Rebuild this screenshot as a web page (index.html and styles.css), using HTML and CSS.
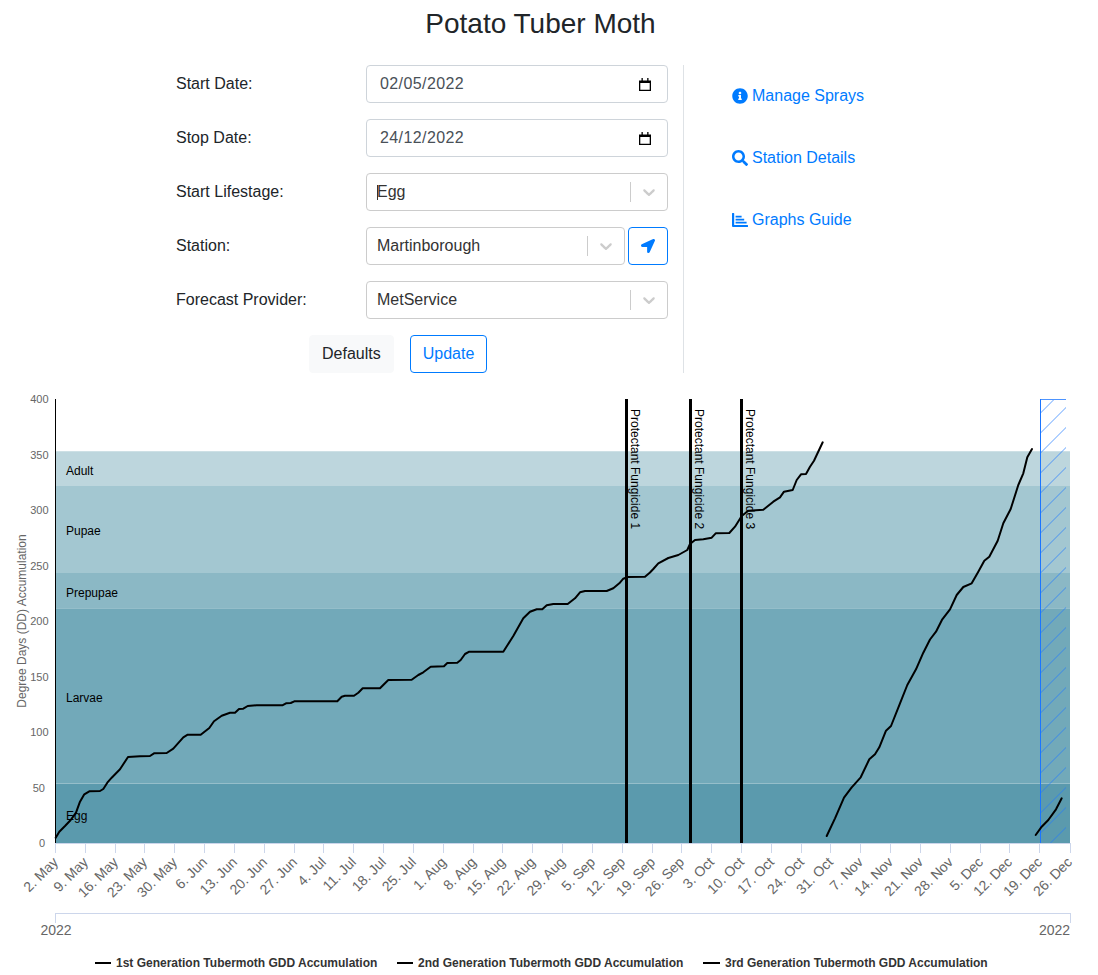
FILE: index.html
```html
<!DOCTYPE html>
<html lang="en">
<head>
<meta charset="utf-8">
<title>Potato Tuber Moth</title>
<link rel="stylesheet" href="styles.css">
</head>
<body>
<div class="page">
  <h1 class="title">Potato Tuber Moth</h1>
  <div class="top">
    <div class="form">
      <div class="row">
        <label class="lbl">Start Date:</label>
        <div class="control date"><span>02/05/2022</span>
          <svg class="cal" viewBox="0 0 12 13"><path d="M0 2.5h12V13H0zM1.3 5v6.7h9.4V5z" fill-rule="evenodd"/><path d="M2.5 0h1.3v3H2.5zM8.2 0h1.3v3H8.2z"/></svg>
        </div>
      </div>
      <div class="row">
        <label class="lbl">Stop Date:</label>
        <div class="control date"><span>24/12/2022</span>
          <svg class="cal" viewBox="0 0 12 13"><path d="M0 2.5h12V13H0zM1.3 5v6.7h9.4V5z" fill-rule="evenodd"/><path d="M2.5 0h1.3v3H2.5zM8.2 0h1.3v3H8.2z"/></svg>
        </div>
      </div>
      <div class="row">
        <label class="lbl">Start Lifestage:</label>
        <div class="control select focused"><span class="val">Egg</span><i class="sep"></i>
          <svg class="chev" viewBox="0 0 20 20"><path d="M4.516 7.548c0.436-0.446 1.043-0.481 1.576 0l3.908 3.747 3.908-3.747c0.533-0.481 1.141-0.446 1.576 0 0.436 0.445 0.408 1.197 0 1.615-0.406 0.418-4.695 4.502-4.695 4.502-0.217 0.223-0.502 0.335-0.789 0.335s-0.572-0.112-0.79-0.335c0 0-4.287-4.084-4.695-4.502s-0.436-1.17 0-1.615z"/></svg>
        </div>
      </div>
      <div class="row">
        <label class="lbl">Station:</label>
        <div class="station">
          <div class="control select"><span class="val">Martinborough</span><i class="sep"></i>
            <svg class="chev" viewBox="0 0 20 20"><path d="M4.516 7.548c0.436-0.446 1.043-0.481 1.576 0l3.908 3.747 3.908-3.747c0.533-0.481 1.141-0.446 1.576 0 0.436 0.445 0.408 1.197 0 1.615-0.406 0.418-4.695 4.502-4.695 4.502-0.217 0.223-0.502 0.335-0.789 0.335s-0.572-0.112-0.79-0.335c0 0-4.287-4.084-4.695-4.502s-0.436-1.17 0-1.615z"/></svg>
          </div>
          <button class="btn outline locate" type="button" aria-label="Locate">
            <svg class="arrow" viewBox="0 0 512 512"><path d="M444.52 3.52L28.74 195.42c-47.97 22.39-31.98 92.75 19.19 92.75h175.91v175.91c0 51.17 70.36 67.17 92.75 19.19l191.9-415.78c15.99-38.39-25.59-79.97-63.97-63.97z"/></svg>
          </button>
        </div>
      </div>
      <div class="row">
        <label class="lbl">Forecast Provider:</label>
        <div class="control select"><span class="val">MetService</span><i class="sep"></i>
          <svg class="chev" viewBox="0 0 20 20"><path d="M4.516 7.548c0.436-0.446 1.043-0.481 1.576 0l3.908 3.747 3.908-3.747c0.533-0.481 1.141-0.446 1.576 0 0.436 0.445 0.408 1.197 0 1.615-0.406 0.418-4.695 4.502-4.695 4.502-0.217 0.223-0.502 0.335-0.789 0.335s-0.572-0.112-0.79-0.335c0 0-4.287-4.084-4.695-4.502s-0.436-1.17 0-1.615z"/></svg>
        </div>
      </div>
      <div class="actions">
        <button class="btn light" type="button">Defaults</button>
        <button class="btn outline" type="button">Update</button>
      </div>
    </div>
    <nav class="links">
      <a class="link" href="#"><svg class="ico" viewBox="0 0 512 512"><path d="M256 8C119.043 8 8 119.083 8 256c0 136.997 111.043 248 248 248s248-111.003 248-248C504 119.083 392.957 8 256 8zm0 110c23.196 0 42 18.804 42 42s-18.804 42-42 42-42-18.804-42-42 18.804-42 42-42zm56 254c0 6.627-5.373 12-12 12h-88c-6.627 0-12-5.373-12-12v-24c0-6.627 5.373-12 12-12h12v-64h-12c-6.627 0-12-5.373-12-12v-24c0-6.627 5.373-12 12-12h64c6.627 0 12 5.373 12 12v100h12c6.627 0 12 5.373 12 12v24z"/></svg>Manage Sprays</a>
      <a class="link" href="#"><svg class="ico" viewBox="0 0 512 512"><path d="M505 442.7L405.3 343c-4.5-4.5-10.6-7-17-7H372c27.6-35.3 44-79.7 44-128C416 93.1 322.9 0 208 0S0 93.1 0 208s93.1 208 208 208c48.3 0 92.7-16.4 128-44v16.3c0 6.4 2.5 12.5 7 17l99.7 99.7c9.4 9.4 24.6 9.4 33.9 0l28.3-28.3c9.4-9.4 9.4-24.6.1-34zM208 336c-70.7 0-128-57.2-128-128 0-70.7 57.2-128 128-128 70.7 0 128 57.2 128 128 0 70.7-57.2 128-128 128z"/></svg>Station Details</a>
      <a class="link" href="#"><svg class="ico" viewBox="0 0 16 16"><path d="M0 1.5a.5.5 0 0 1 .5-.5h1.2a.5.5 0 0 1 .5.5V13h13.3a.5.5 0 0 1 .5.5v1a.5.5 0 0 1-.5.5H1a1 1 0 0 1-1-1zM3.6 3.8h6v1.8h-6zM3.6 6.8h8.6v1.8H3.6zM3.6 9.8h11v1.8h-11z"/></svg>Graphs Guide</a>
    </nav>
  </div>

  <svg class="chart" viewBox="0 385 1083 590" width="1083" height="590" role="img">
    <defs>
      <pattern id="hatch" patternUnits="userSpaceOnUse" x="0" y="13.5" width="20" height="20">
        <path class="hatch-line" d="M-2 22L22 -2"/>
      </pattern>
    </defs>
    <rect class="b-adult" x="55" y="451" width="1015" height="35"/>
    <rect class="b-pupae" x="55" y="486" width="1015" height="87"/>
    <rect class="b-prepupae" x="55" y="573" width="1015" height="35"/>
    <rect class="b-larvae" x="55" y="608" width="1015" height="176"/>
    <rect class="b-egg" x="55" y="784" width="1015" height="59"/>
    <path class="b-edge" d="M55 451.5H1070M55 608.5H1070M55 783.5H1070"/>

    <rect class="forecast" x="1040" y="399" width="26" height="444"/>
    <path class="forecast-top" d="M1066 399.5H1040"/>
    <path class="forecast-edge" d="M1040.5 399V843"/>

    <path class="axis-y" d="M55.5 399V843"/>
    <path class="grid" d="M55 843.5H1071M55 913.5H1071M55.5 913V923M1070.5 913V923M55.5 843V853M85.5 843V853M115.5 843V853M144.5 843V853M174.5 843V853M204.5 843V853M234.5 843V853M264.5 843V853M294.5 843V853M323.5 843V853M353.5 843V853M383.5 843V853M413.5 843V853M443.5 843V853M473.5 843V853M502.5 843V853M532.5 843V853M562.5 843V853M592.5 843V853M622.5 843V853M652.5 843V853M681.5 843V853M711.5 843V853M741.5 843V853M771.5 843V853M801.5 843V853M830.5 843V853M860.5 843V853M890.5 843V853M920.5 843V853M950.5 843V853M980.5 843V853M1009.5 843V853M1039.5 843V853M1070.5 843V853"/>

    <g class="band-labels">
      <text x="66" y="475">Adult</text>
      <text x="66" y="535">Pupae</text>
      <text x="66" y="597">Prepupae</text>
      <text x="66" y="702">Larvae</text>
      <text x="66" y="820">Egg</text>
    </g>

    <path class="spray" d="M626.5 399V843M690.5 399V843M741.5 399V843"/>
    <g class="spray-labels">
      <text transform="translate(631 409) rotate(90)">Protectant Fungicide 1</text>
      <text transform="translate(695 409) rotate(90)">Protectant Fungicide 2</text>
      <text transform="translate(746 409) rotate(90)">Protectant Fungicide 3</text>
    </g>

    <polyline class="curve" points="55.7,837.7 59.3,831.7 65,826 70.7,820 76,812.7 80,801.7 84.3,794.3 89.3,791.3 100,791 103.3,789 107.3,782.7 111.7,777.7 120,769.3 128,757 140,756.3 150,756 154,753.3 166.7,753 173.3,748.7 183.3,737.3 187.7,734.7 200.7,734.7 209.3,728 214,721.3 221.7,715.7 230,712.7 235,712.7 239,709 243.3,708.7 247.7,706 256.7,705.3 282.3,705.3 286,703.3 290.7,703 294.3,701.3 337.3,701.3 341.7,696.7 345,695.7 354,695.7 358.3,692.7 362.7,688.3 380,688.3 388.3,680 411.7,679.7 418.3,675 423.3,672.3 430.7,666.7 444,666.3 447.3,663 457.3,662.7 460.7,660 465,654 469.3,651.7 503.3,651.7 513.3,636 523.3,618.3 530,611.7 536.7,609.3 542.3,609.3 546.7,605.3 553.3,604 567.7,604 575,598.3 580,592.3 585,591 606.7,591 613.3,588.3 619.3,583.3 623.3,578.7 628,577 645,576.7 650,572.5 653.3,569 658.3,563.3 668.3,558 678.3,555 687.3,550 690,544 695,540 703.3,539.3 711.7,537.7 715.7,533.3 729.3,533 735,526.7 741.7,516 748.3,510.7 763.3,509.7 773.3,501.7 780,497.3 784,491.7 792.7,490 796.7,480 801,474.3 806,474 810,466.7 814,460.7 822.7,442.3"/>
    <polyline class="curve" points="826.7,836 835,818.3 844,797.7 851.7,787.3 860.7,777.3 869.3,759.3 875,754.3 879.3,747.3 886,730.7 891,726 900,703.3 907.3,685 916,669.3 923.3,652.7 930,639.5 936,631.7 942.3,619.3 950,609.3 956.7,595 963.3,587 971.7,583.3 978.3,571.7 984.3,560.7 989.3,556.7 997.7,540.7 1003.3,523.3 1010.7,509 1018.3,485 1023.3,473.3 1027.3,457.3 1032,449"/>
    <polyline class="curve" points="1035.7,835 1041.7,826.7 1048.3,820 1056,809.3 1061.7,798.3"/>

    <g class="y-labels">
      <text x="48.5" y="403">400</text>
      <text x="48.5" y="458.5">350</text>
      <text x="48.5" y="514">300</text>
      <text x="48.5" y="569.5">250</text>
      <text x="48.5" y="625">200</text>
      <text x="48.5" y="680.5">150</text>
      <text x="48.5" y="736">100</text>
      <text x="45" y="792">50</text>
      <text x="45" y="847">0</text>
    </g>
    <text class="y-title" transform="translate(26 621) rotate(-90)">Degree Days (DD) Accumulation</text>

    <g class="x-labels">
      <text transform="translate(59 863) rotate(-45)">2. May</text>
      <text transform="translate(89 863) rotate(-45)">9. May</text>
      <text transform="translate(119 863) rotate(-45)">16. May</text>
      <text transform="translate(148 863) rotate(-45)">23. May</text>
      <text transform="translate(178 863) rotate(-45)">30. May</text>
      <text transform="translate(208 863) rotate(-45)">6. Jun</text>
      <text transform="translate(238 863) rotate(-45)">13. Jun</text>
      <text transform="translate(268 863) rotate(-45)">20. Jun</text>
      <text transform="translate(298 863) rotate(-45)">27. Jun</text>
      <text transform="translate(327 863) rotate(-45)">4. Jul</text>
      <text transform="translate(357 863) rotate(-45)">11. Jul</text>
      <text transform="translate(387 863) rotate(-45)">18. Jul</text>
      <text transform="translate(417 863) rotate(-45)">25. Jul</text>
      <text transform="translate(447 863) rotate(-45)">1. Aug</text>
      <text transform="translate(477 863) rotate(-45)">8. Aug</text>
      <text transform="translate(506 863) rotate(-45)">15. Aug</text>
      <text transform="translate(536 863) rotate(-45)">22. Aug</text>
      <text transform="translate(566 863) rotate(-45)">29. Aug</text>
      <text transform="translate(596 863) rotate(-45)">5. Sep</text>
      <text transform="translate(626 863) rotate(-45)">12. Sep</text>
      <text transform="translate(656 863) rotate(-45)">19. Sep</text>
      <text transform="translate(685 863) rotate(-45)">26. Sep</text>
      <text transform="translate(715 863) rotate(-45)">3. Oct</text>
      <text transform="translate(745 863) rotate(-45)">10. Oct</text>
      <text transform="translate(775 863) rotate(-45)">17. Oct</text>
      <text transform="translate(805 863) rotate(-45)">24. Oct</text>
      <text transform="translate(834 863) rotate(-45)">31. Oct</text>
      <text transform="translate(864 863) rotate(-45)">7. Nov</text>
      <text transform="translate(894 863) rotate(-45)">14. Nov</text>
      <text transform="translate(924 863) rotate(-45)">21. Nov</text>
      <text transform="translate(954 863) rotate(-45)">28. Nov</text>
      <text transform="translate(984 863) rotate(-45)">5. Dec</text>
      <text transform="translate(1013 863) rotate(-45)">12. Dec</text>
      <text transform="translate(1043 863) rotate(-45)">19. Dec</text>
      <text transform="translate(1073 863) rotate(-45)">26. Dec</text>
    </g>
    <text class="year" x="40.5" y="935">2022</text>
    <text class="year" x="1039" y="935">2022</text>

    <path class="legend-line" d="M95 963H111M397 963H413M703 963H720"/>
    <g class="legend">
      <text x="116" y="967">1st Generation Tubermoth GDD Accumulation</text>
      <text x="418" y="967">2nd Generation Tubermoth GDD Accumulation</text>
      <text x="725" y="967">3rd Generation Tubermoth GDD Accumulation</text>
    </g>
  </svg>
</div>
</body>
</html>
```
FILE: styles.css
```css
* { box-sizing: border-box; }
html, body { margin: 0; padding: 0; }
body {
  background: #fff;
  color: #212529;
  font-family: "Liberation Sans", Arial, sans-serif;
  font-size: 16px;
  line-height: 1.5;
  overflow: hidden;
}
.page { width: 1083px; height: 975px; }
.title {
  margin: 0;
  padding: 7px 2px 0 0;
  height: 65px;
  font-size: 28px;
  font-weight: 400;
  line-height: 33.6px;
  text-align: center;
}
.top { display: flex; margin-left: 176px; height: 308px; }
.form {
  width: 508px;
  padding-right: 15px;
  border-right: 1px solid #dee2e6;
  display: flex;
  flex-direction: column;
  gap: 16px;
}
.row { display: flex; align-items: center; height: 38px; }
.lbl { width: 190px; flex: none; }
.control {
  position: relative;
  display: flex;
  align-items: center;
  height: 38px;
  background: #fff;
  border-radius: 4px;
  flex: 1;
  min-width: 0;
}
.date { border: 1px solid #ced4da; padding: 0 16px 0 13px; color: #495057; justify-content: space-between; letter-spacing: .4px; }
.cal { width: 12px; height: 13px; fill: #000; }
.select { border: 1px solid #ccc; color: #333; padding-left: 10px; }
.val { flex: 1; }
.focused::before {
  content: "";
  position: absolute;
  left: 10px;
  top: 11px;
  width: 1px;
  height: 15px;
  background: #333;
}
.sep { width: 1px; height: 20px; background: #ccc; flex: none; }
.chev { width: 20px; height: 20px; margin: 0 8px; fill: #ccc; flex: none; }
.station { display: flex; gap: 3px; flex: 1; }
.btn {
  font: inherit;
  height: 38px;
  padding: 0 12px;
  border-radius: 4px;
  border: 1px solid transparent;
  background: transparent;
}
.outline { border-color: #007bff; color: #007bff; }
.light { background: #f8f9fa; border-color: #f8f9fa; color: #212529; }
.locate { width: 40px; padding: 0; display: flex; align-items: center; justify-content: center; flex: none; }
.arrow { width: 14px; height: 14px; fill: #007bff; }
.actions { display: flex; gap: 16px; margin-left: 133px; }
.links { display: flex; flex-direction: column; gap: 38px; padding: 19px 0 0 48px; }
.link { display: flex; align-items: center; gap: 4px; height: 24px; color: #007bff; text-decoration: none; }
.ico { width: 16px; height: 16px; fill: #007bff; flex: none; }

.chart { display: block; margin-top: 12px; font-family: "Liberation Sans", Arial, sans-serif; }
.b-adult { fill: #bdd6dd; }
.b-pupae { fill: #a3c7d1; }
.b-prepupae { fill: #8bb8c5; }
.b-larvae { fill: #72a9b9; }
.b-egg { fill: #5b9aad; }
.b-edge { fill: none; stroke: #fff; stroke-opacity: .25; stroke-width: 1; }
.forecast { fill: url(#hatch); }
.hatch-line { stroke: #1f7aff; stroke-opacity: .7; stroke-width: 1; fill: none; }
.forecast-edge { fill: none; stroke: #1a75ff; stroke-width: 1; }
.forecast-top { fill: none; stroke: #4d94ff; stroke-width: 1; }
.axis-y { stroke: #000; stroke-width: 1; fill: none; }
.grid { stroke: #ccd6eb; stroke-width: 1; fill: none; }
.spray { stroke: #000; stroke-width: 3; fill: none; }
.curve { fill: none; stroke: #000; stroke-width: 2; stroke-linejoin: round; stroke-linecap: round; }
.band-labels text, .spray-labels text { font-size: 12px; fill: #000; }
.y-labels text { font-size: 11px; fill: #666; text-anchor: end; }
.y-title { font-size: 12px; fill: #666; text-anchor: middle; }
.x-labels text { font-size: 14px; fill: #666; text-anchor: end; }
.year { font-size: 14px; fill: #666; }
.legend-line { stroke: #000; stroke-width: 2; fill: none; }
.legend text { font-size: 12px; font-weight: 700; fill: #333; }
```
